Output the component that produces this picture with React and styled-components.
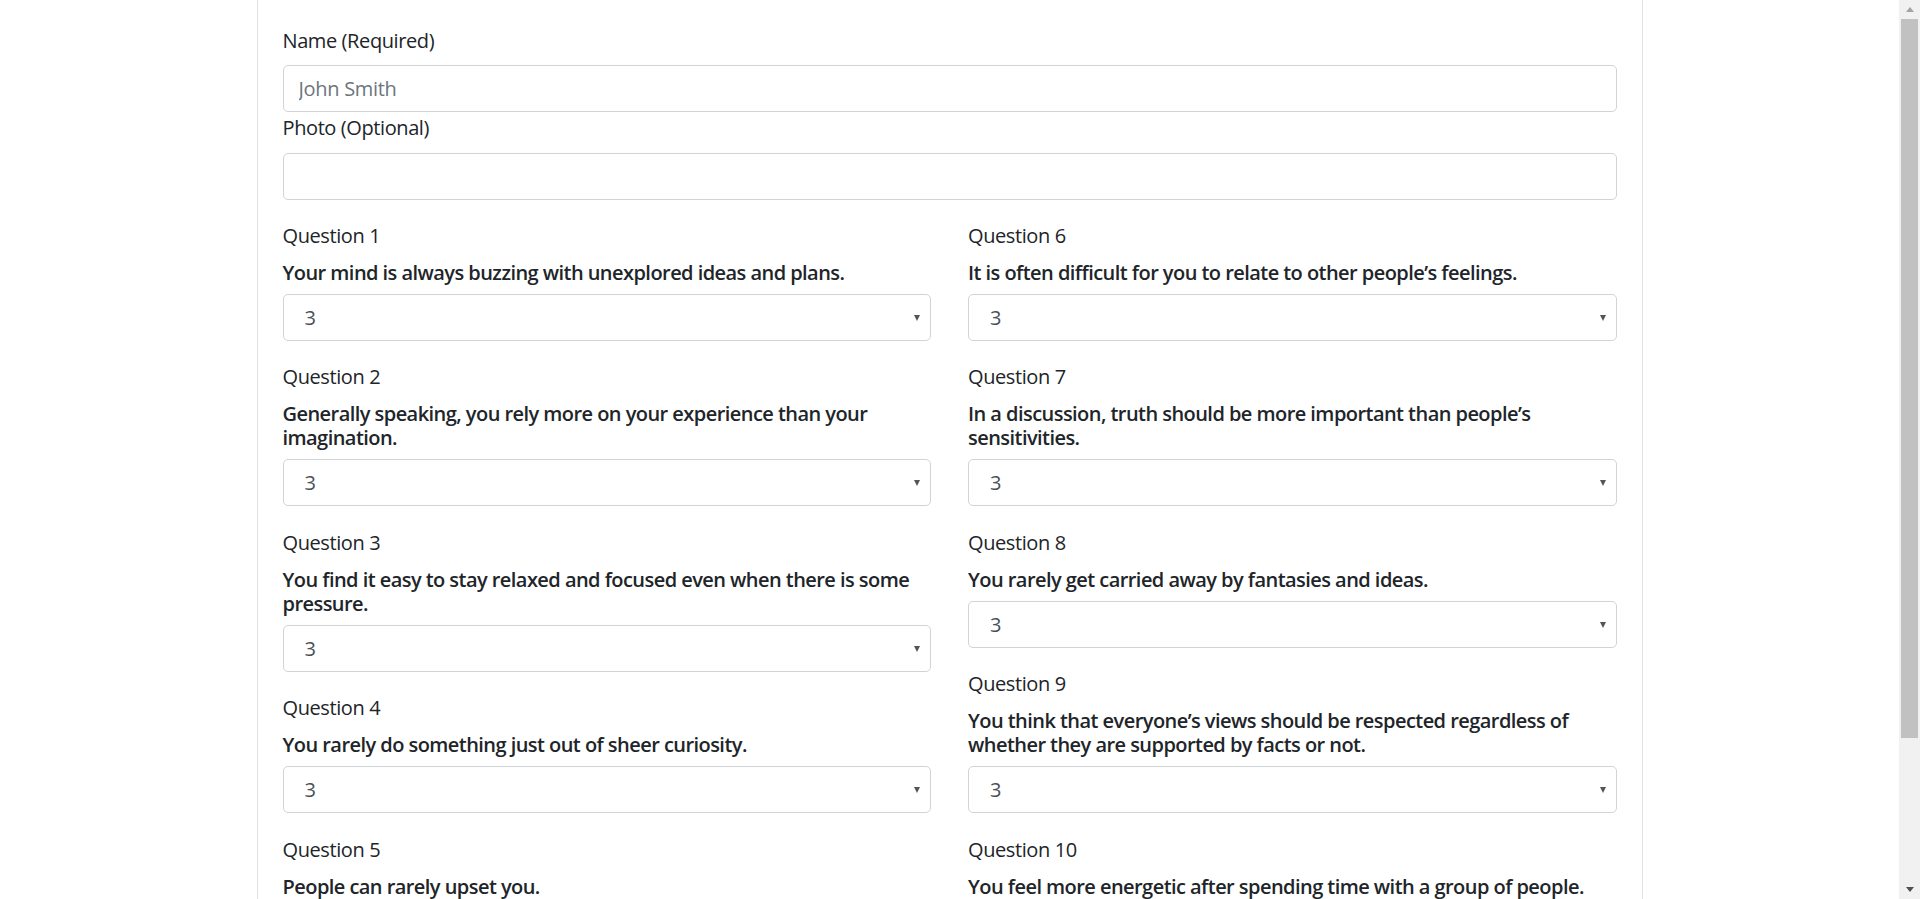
import React from 'react';
import styled, { createGlobalStyle } from 'styled-components';

const GlobalStyle = createGlobalStyle`
  html, body {
    margin: 0;
    padding: 0;
    background: #fff;
    overflow: hidden;
  }
  body {
    font-family: "Open Sans", "Noto Sans", sans-serif;
    color: #212529;
  }
  * { box-sizing: border-box; }
`;

const questions = [
  'Your mind is always buzzing with unexplored ideas and plans.',
  'Generally speaking, you rely more on your experience than your imagination.',
  'You find it easy to stay relaxed and focused even when there is some pressure.',
  'You rarely do something just out of sheer curiosity.',
  'People can rarely upset you.',
  'It is often difficult for you to relate to other people\u2019s feelings.',
  'In a discussion, truth should be more important than people\u2019s sensitivities.',
  'You rarely get carried away by fantasies and ideas.',
  'You think that everyone\u2019s views should be respected regardless of whether they are supported by facts or not.',
  'You feel more energetic after spending time with a group of people.',
];

const Viewport = styled.div`
  display: flex;
  height: 100vh;
  overflow: hidden;
`;

const Main = styled.main`
  flex: 1;
  min-width: 0;
  overflow: hidden;
`;

const Page = styled.div`
  width: 1386px;
  margin: 0 auto;
  min-height: 1400px;
  padding: 29px 25px 40px;
  border-left: 1px solid #dee2e6;
  border-right: 1px solid #dee2e6;
`;

const FieldLabel = styled.label`
  display: block;
  font-size: 20px;
  line-height: 24px;
  letter-spacing: -0.4px;
  margin-bottom: ${(p) => p.$gap || 12}px;
  margin-top: ${(p) => p.$top || 0}px;
`;

const TextInput = styled.input`
  display: block;
  width: 100%;
  height: 47px;
  padding: 0 15px;
  font-family: inherit;
  font-size: 20px;
  letter-spacing: -0.3px;
  color: #495057;
  border: 1px solid #ced4da;
  border-radius: 5px;
  outline: none;
  &::placeholder {
    color: #6c757d;
  }
`;

const Columns = styled.div`
  display: grid;
  grid-template-columns: 1fr 1fr;
  column-gap: 37px;
  margin-top: 24px;
`;

const Column = styled.div`
  display: flex;
  flex-direction: column;
  gap: 24.4px;
`;

const Question = styled.div`
  display: flex;
  flex-direction: column;
`;

const QuestionLabel = styled.div`
  font-size: 20px;
  line-height: 24px;
  letter-spacing: -0.4px;
  margin-bottom: 13px;
`;

const QuestionText = styled.p`
  margin: 0 0 9px;
  font-size: 20px;
  font-weight: 600;
  line-height: 24px;
  letter-spacing: -0.55px;
`;

const SelectWrap = styled.div`
  position: relative;
  &::after {
    content: '';
    position: absolute;
    right: 11px;
    top: 21px;
    border-left: 3.5px solid transparent;
    border-right: 3.5px solid transparent;
    border-top: 6px solid #555;
    pointer-events: none;
  }
`;

const Select = styled.select`
  display: block;
  width: 100%;
  height: 47px;
  padding: 0 30px 0 21px;
  font-family: inherit;
  font-size: 20px;
  color: #495057;
  background: #fff;
  border: 1px solid #ced4da;
  border-radius: 5px;
  appearance: none;
  outline: none;
`;

const Scrollbar = styled.div`
  width: 21px;
  flex: none;
  display: flex;
  flex-direction: column;
  background: #f1f1f1;
`;

const ScrollArrow = styled.div`
  height: 19px;
  flex: none;
  display: flex;
  align-items: center;
  justify-content: center;
  &::before {
    content: '';
    border-left: 4.5px solid transparent;
    border-right: 4.5px solid transparent;
    ${(p) =>
      p.$down
        ? 'border-top: 5px solid #505050;'
        : 'border-bottom: 5px solid #a3a3a3;'}
  }
`;

const Thumb = styled.div`
  height: 719px;
  margin: 0 2px 0 2px;
  background: #c1c1c1;
`;

const Track = styled.div`
  flex: 1;
`;

const QuestionBlock = ({ n, text }) => (
  <Question>
    <QuestionLabel>Question {n}</QuestionLabel>
    <QuestionText>{text}</QuestionText>
    <SelectWrap>
      <Select defaultValue="3">
        {[1, 2, 3, 4, 5].map((v) => (
          <option key={v} value={v}>{v}</option>
        ))}
      </Select>
    </SelectWrap>
  </Question>
);

export default function App() {
  return (
    <>
      <GlobalStyle />
      <Viewport>
        <Main>
          <Page>
            <FieldLabel>Name (Required)</FieldLabel>
            <TextInput placeholder="John Smith" />
            <FieldLabel $top={4} $gap={13}>Photo (Optional)</FieldLabel>
            <TextInput />
            <Columns>
              <Column>
                {questions.slice(0, 5).map((q, i) => (
                  <QuestionBlock key={i} n={i + 1} text={q} />
                ))}
              </Column>
              <Column>
                {questions.slice(5).map((q, i) => (
                  <QuestionBlock key={i} n={i + 6} text={q} />
                ))}
              </Column>
            </Columns>
          </Page>
        </Main>
        <Scrollbar>
          <ScrollArrow />
          <Thumb />
          <Track />
          <ScrollArrow $down />
        </Scrollbar>
      </Viewport>
    </>
  );
}
